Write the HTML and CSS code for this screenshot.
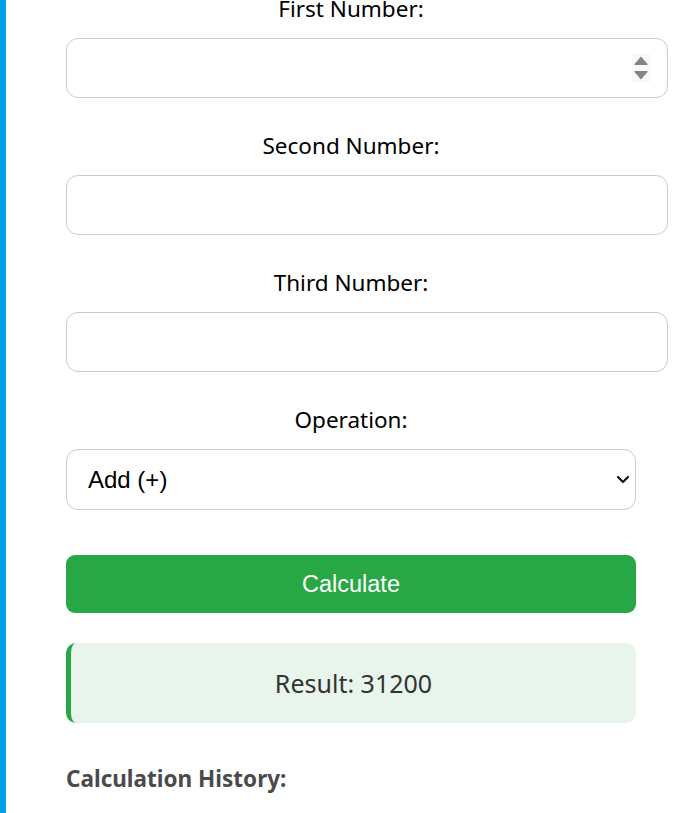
FILE: index.html
```html
<!DOCTYPE html>
<html lang="en">
<head>
<meta charset="utf-8">
<title>Calculator</title>
<link rel="stylesheet" href="styles.css">
</head>
<body>
<div class="page">
  <div class="calc">
    <div class="form-group">
      <label class="field-label" for="n1">First Number:</label>
      <div class="input-wrap">
        <input class="num-input" id="n1" type="number">
        <svg class="spinner" width="18" height="28" viewBox="0 0 18 28" aria-hidden="true">
          <rect x="0" y="0" width="18" height="28" fill="#f8f8f8"/>
          <path d="M9 3.5 L15 10.5 L3 10.5 Z" fill="#848484" stroke="#848484" stroke-width="1.2" stroke-linejoin="round"/>
          <path d="M3 17.5 L15 17.5 L9 24.5 Z" fill="#848484" stroke="#848484" stroke-width="1.2" stroke-linejoin="round"/>
        </svg>
      </div>
    </div>
    <div class="form-group">
      <label class="field-label" for="n2">Second Number:</label>
      <input class="num-input" id="n2" type="number">
    </div>
    <div class="form-group">
      <label class="field-label" for="n3">Third Number:</label>
      <input class="num-input" id="n3" type="number">
    </div>
    <div class="form-group form-group-op">
      <label class="field-label" for="op">Operation:</label>
      <select class="op-select" id="op">
        <option>Add (+)</option>
        <option>Subtract (-)</option>
        <option>Multiply (×)</option>
        <option>Divide (÷)</option>
      </select>
    </div>
    <button class="calc-btn" type="button">Calculate</button>
    <div class="result">Result: 31200</div>
    <h3 class="history-title">Calculation History:</h3>
  </div>
</div>
</body>
</html>
```

FILE: styles.css
```css
html, body {
  margin: 0;
  padding: 0;
  background: #ffffff;
}

body {
  font-family: "Noto Sans", "Open Sans", sans-serif;
  color: #000;
  overflow: hidden;
}

.page {
  display: flow-root;
  border-left: 6px solid #00a0e9;
  min-height: 100vh;
  padding-left: 60px;
  box-sizing: border-box;
}

.calc {
  width: 570px;
  margin-top: -7px;
}

.form-group {
  margin-bottom: 32px;
}

.form-group-op {
  margin-bottom: 45px;
}

.field-label {
  display: block;
  text-align: center;
  font-size: 22.5px;
  line-height: 32px;
  margin-bottom: 13px;
  color: #000;
}

.input-wrap {
  position: relative;
}

.num-input {
  display: block;
  width: 100%;
  height: 28px;
  padding: 15px;
  border: 1px solid #cccccc;
  border-radius: 12px;
  font-family: "Liberation Sans", Arial, sans-serif;
  font-size: 24px;
  background: #fff;
  outline: none;
  -moz-appearance: textfield;
}

.num-input::-webkit-outer-spin-button,
.num-input::-webkit-inner-spin-button {
  -webkit-appearance: none;
  margin: 0;
}

.spinner {
  position: absolute;
  left: 566px;
  top: 16px;
}

.op-select {
  display: block;
  width: 100%;
  height: 61px;
  padding: 0 40px 0 21px;
  border: 1px solid #cccccc;
  border-radius: 12px;
  font-family: "Liberation Sans", Arial, sans-serif;
  font-size: 24px;
  color: #000;
  background-color: #fff;
  -webkit-appearance: none;
  appearance: none;
  background-image: url("data:image/svg+xml;utf8,<svg xmlns='http://www.w3.org/2000/svg' width='14' height='9' viewBox='0 0 14 9'><path d='M2 2 L7 7 L12 2' fill='none' stroke='%23111' stroke-width='2.2' stroke-linecap='round' stroke-linejoin='round'/></svg>");
  background-repeat: no-repeat;
  background-position: right 5px center;
  background-size: 14px 9px;
}

.calc-btn {
  display: block;
  width: 100%;
  height: 58px;
  border: none;
  border-radius: 9px;
  background: #28a745;
  color: #fff;
  font-family: "Liberation Sans", Arial, sans-serif;
  font-size: 23.5px;
  cursor: pointer;
}

.result {
  margin-top: 30px;
  height: 80px;
  box-sizing: border-box;
  border-left: 5px solid #28a745;
  border-radius: 10px;
  background: #e8f5ec;
  color: #333;
  font-size: 25px;
  display: flex;
  align-items: center;
  justify-content: center;
}

.history-title {
  margin: 41px 0 0 0;
  font-size: 22.5px;
  font-weight: 700;
  color: #4a4a4a;
  line-height: 30px;
}
```
